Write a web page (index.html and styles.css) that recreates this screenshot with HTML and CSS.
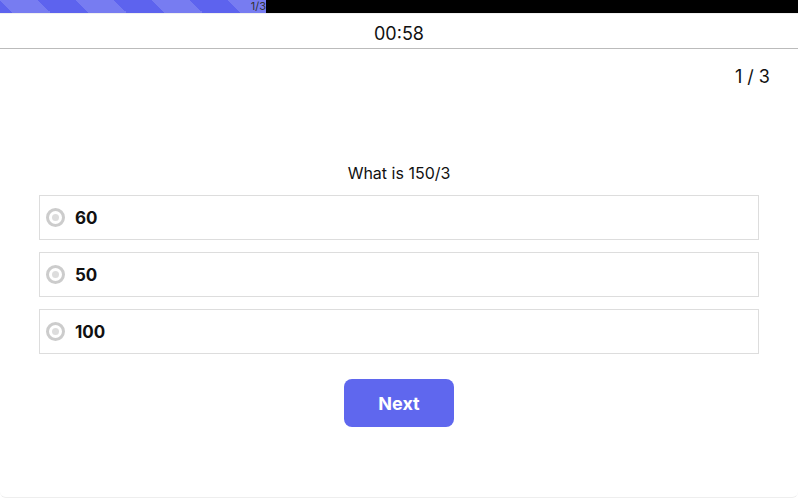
FILE: index.html
```html
<!DOCTYPE html>
<html lang="en">
<head>
  <meta charset="UTF-8">
  <title>Quiz</title>
  <link rel="stylesheet" href="styles.css">
</head>
<body>
  <div class="page">
    <div class="progress">
      <div class="progress-bar" style="width: 33.33%">1/3</div>
    </div>
    <header class="timer-bar">
      <span class="timer">00:58</span>
    </header>

    <main class="quiz">
      <div class="counter">1 / 3</div>
      <h2 class="question">What is 150/3</h2>
      <ul class="options">
        <li class="option"><span class="radio"></span><span class="label">60</span></li>
        <li class="option"><span class="radio"></span><span class="label">50</span></li>
        <li class="option"><span class="radio"></span><span class="label">100</span></li>
      </ul>
      <div class="actions">
        <button class="btn-next">Next</button>
      </div>
    </main>
  </div>
</body>
</html>
```

FILE: styles.css
```css
html, body {
  margin: 0;
  padding: 0;
  background: #fff;
  font-family: Inter, "Liberation Sans", sans-serif;
  color: #111;
}
.page {
  height: 497px;
  border-bottom: 1px solid #eee;
  border-radius: 0 0 6px 6px;
  overflow: hidden;
}
.progress {
  height: 13px;
  background: #000;
}
.progress-bar {
  height: 100%;
  background-color: #5d63ee;
  background-image: linear-gradient(45deg, rgba(255,255,255,.16) 25%, transparent 25%, transparent 50%, rgba(255,255,255,.16) 50%, rgba(255,255,255,.16) 75%, transparent 75%, transparent);
  background-size: 76px 76px;
  font-size: 11px;
  line-height: 13px;
  color: #333;
  text-align: right;
}
.timer-bar {
  height: 34px;
  border-top: 1px solid #f0f0f0;
  border-bottom: 1px solid #bbb;
  display: flex;
  align-items: center;
  justify-content: center;
}
.timer {
  font-size: 18px;
  padding-top: 4px;
}
.quiz {
  padding: 0 39px;
}
.counter {
  text-align: right;
  font-size: 18px;
  margin: 17px -11px 0 0;
}
.question {
  text-align: center;
  font-size: 16px;
  font-weight: 400;
  margin: 76px 0 12px;
}
.options {
  list-style: none;
  margin: 0;
  padding: 0;
  display: flex;
  flex-direction: column;
  gap: 12px;
}
.option {
  height: 43px;
  border: 1px solid #ddd;
  display: flex;
  align-items: center;
  padding-left: 6px;
}
.radio {
  width: 13px;
  height: 13px;
  border: 3px solid #ccc;
  border-radius: 50%;
  display: flex;
  align-items: center;
  justify-content: center;
  margin-right: 10px;
}
.radio::after {
  content: "";
  width: 7px;
  height: 7px;
  border-radius: 50%;
  background: #ddd;
}
.label {
  font-size: 17px;
  font-weight: 700;
}
.actions {
  display: flex;
  justify-content: center;
  margin-top: 25px;
}
.btn-next {
  width: 110px;
  height: 48px;
  border: none;
  border-radius: 8px;
  background: #5f67ee;
  color: #fff;
  font-family: Inter, "Liberation Sans", sans-serif;
  font-size: 18px;
  font-weight: 700;
}
```
